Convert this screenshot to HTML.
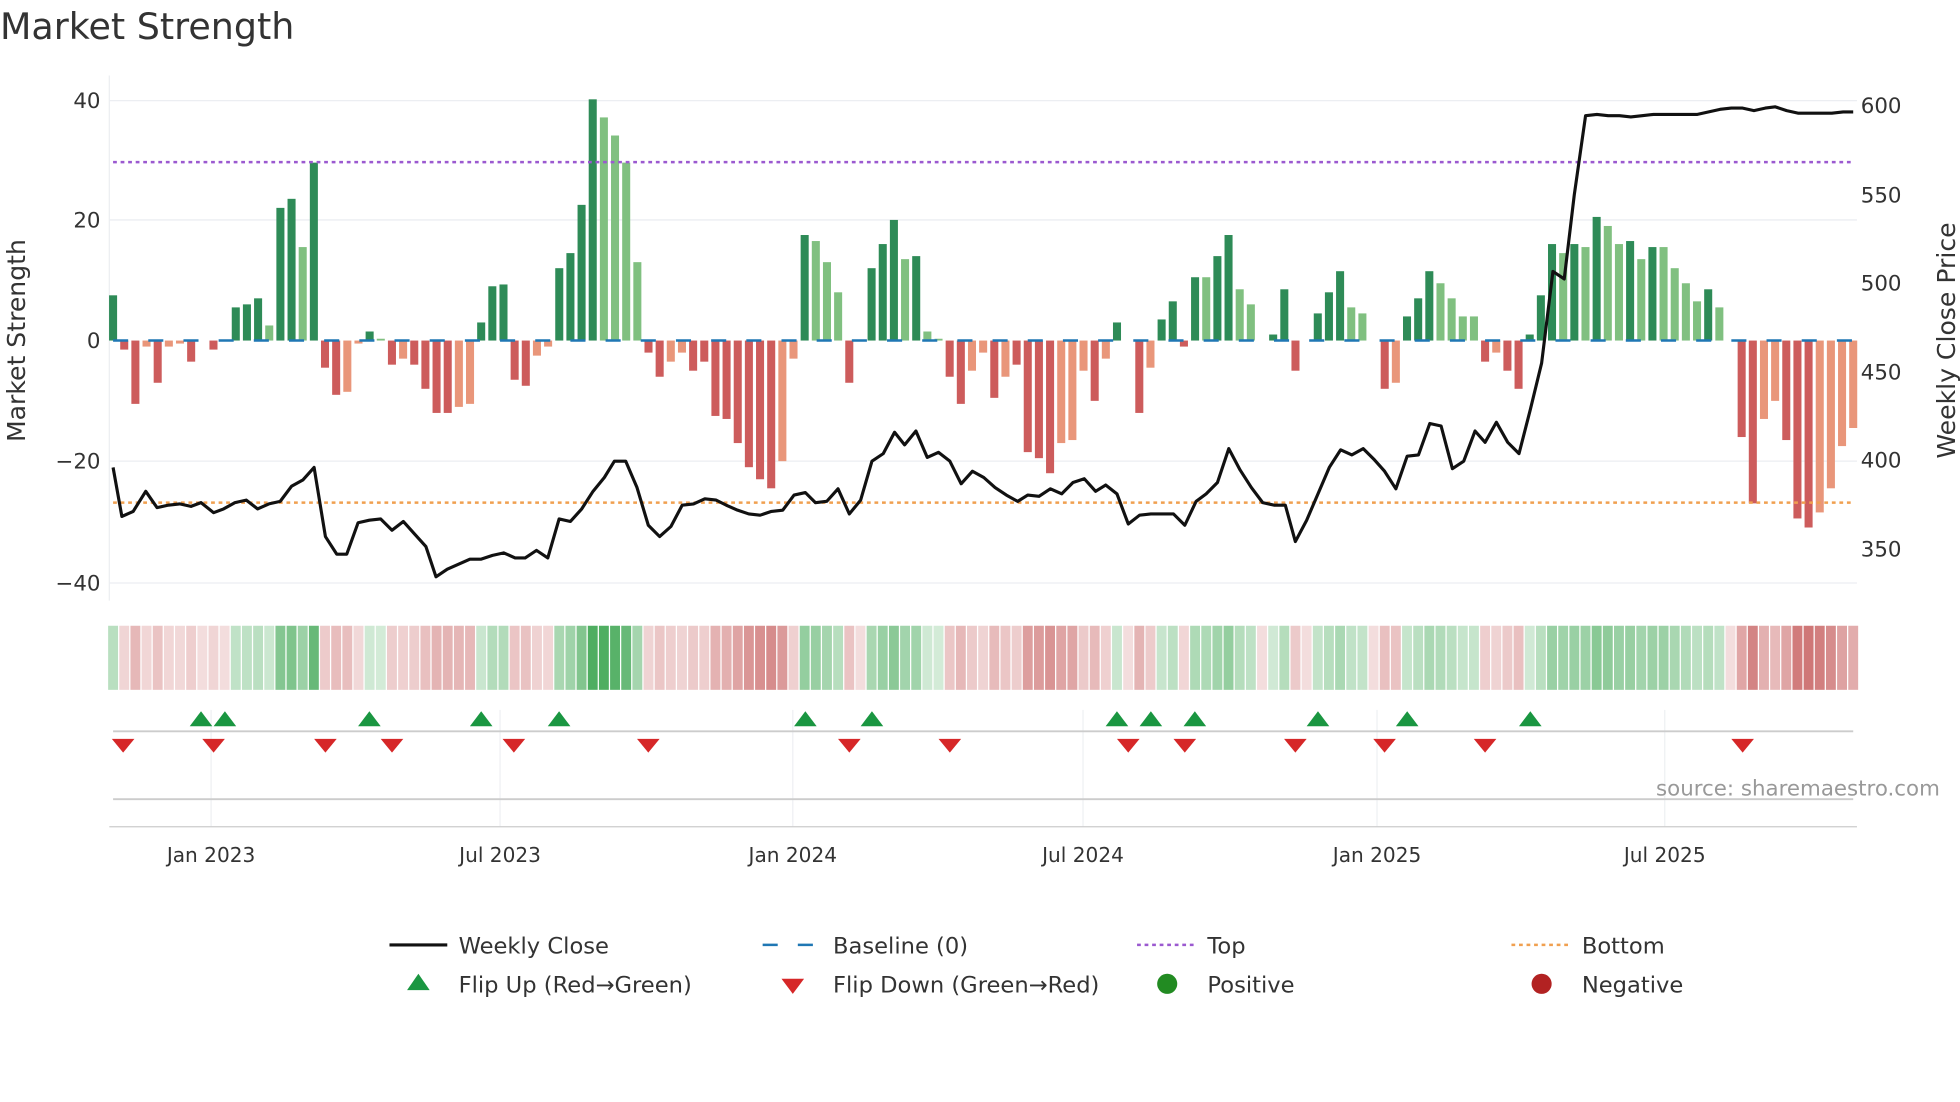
<!DOCTYPE html>
<html><head><meta charset="utf-8"><style>
html,body{margin:0;padding:0;background:#fff;}
svg{display:block;font-family:"DejaVu Sans","Liberation Sans",sans-serif;}
</style></head><body>
<svg id="s" width="1960" height="1102" viewBox="0 0 1560 877" xmlns="http://www.w3.org/2000/svg">
<rect width="1560" height="877" fill="#fff"/>
<text x="0" y="31" font-size="29" fill="#333">Market Strength</text>
<g stroke="#eceef2" stroke-width="1">
<line x1="87" y1="80" x2="1478" y2="80"/><line x1="87" y1="175" x2="1478" y2="175"/>
<line x1="87" y1="367" x2="1478" y2="367"/><line x1="87" y1="464" x2="1478" y2="464"/>
<line x1="87" y1="60" x2="87" y2="478"/>
</g>
<g font-size="17" fill="#333" text-anchor="end">
<text x="80" y="86">40</text><text x="80" y="181">20</text><text x="80" y="277">0</text>
<text x="80" y="373">−20</text><text x="80" y="470">−40</text>
</g>
<g font-size="17" fill="#333">
<text x="1481" y="90">600</text><text x="1481" y="161">550</text><text x="1481" y="231">500</text>
<text x="1481" y="302">450</text><text x="1481" y="372">400</text><text x="1481" y="443">350</text>
</g>
<text transform="translate(20,271) rotate(-90)" font-size="20" fill="#333" text-anchor="middle">Market Strength</text>
<text transform="translate(1556,271) rotate(-90)" font-size="20" fill="#333" text-anchor="middle">Weekly Close Price</text>
<g id="bars"></g>
<line x1="90" y1="271" x2="1475" y2="271" stroke="#1f77b4" stroke-width="2" stroke-dasharray="12,16"/>
<line x1="90" y1="129" x2="1475" y2="129" stroke="#9b59d0" stroke-width="2" stroke-dasharray="3,3"/>
<line x1="90" y1="400" x2="1475" y2="400" stroke="#f0a050" stroke-width="2" stroke-dasharray="3,3"/>
<polyline id="price" fill="none" stroke="#111" stroke-width="2.5" stroke-linejoin="round"/>
<g id="heat"></g>
<g stroke="#eef0f3"><line x1="168" y1="565" x2="168" y2="658"/><line x1="398" y1="565" x2="398" y2="658"/><line x1="631" y1="565" x2="631" y2="658"/><line x1="862" y1="565" x2="862" y2="658"/><line x1="1096" y1="565" x2="1096" y2="658"/><line x1="1325" y1="565" x2="1325" y2="658"/></g>
<line x1="90" y1="582" x2="1475" y2="582" stroke="#ccc" stroke-width="1.5"/>
<line x1="90" y1="636" x2="1475" y2="636" stroke="#ccc" stroke-width="1.5"/>
<line x1="87" y1="658" x2="1478" y2="658" stroke="#ccc" stroke-width="1"/>
<g id="marks"></g>
<text x="1544" y="633" font-size="17" fill="#999" text-anchor="end">source: sharemaestro.com</text>
<g font-size="16" fill="#333" text-anchor="middle">
<text x="168" y="686">Jan 2023</text><text x="398" y="686">Jul 2023</text><text x="631" y="686">Jan 2024</text>
<text x="862" y="686">Jul 2024</text><text x="1096" y="686">Jan 2025</text><text x="1325" y="686">Jul 2025</text>
</g>
<g font-size="18" fill="#333">
<line x1="310" y1="752" x2="356" y2="752" stroke="#111" stroke-width="2.5"/><text x="365" y="759">Weekly Close</text>
<line x1="607" y1="752" x2="652" y2="752" stroke="#1f77b4" stroke-width="2" stroke-dasharray="12,16"/><text x="663" y="759">Baseline (0)</text>
<line x1="905" y1="752" x2="950" y2="752" stroke="#9b59d0" stroke-width="2" stroke-dasharray="3,3"/><text x="961" y="759">Top</text>
<line x1="1203" y1="752" x2="1248" y2="752" stroke="#f0a050" stroke-width="2" stroke-dasharray="3,3"/><text x="1259" y="759">Bottom</text>
<polygon points="324,788 342,788 333,775" fill="#1a9641"/><text x="365" y="790">Flip Up (Red→Green)</text>
<polygon points="622,779 640,779 631,791" fill="#d62728"/><text x="663" y="790">Flip Down (Green→Red)</text>
<circle cx="929" cy="783" r="8" fill="#228b22"/><text x="961" y="790">Positive</text>
<circle cx="1227" cy="783" r="8" fill="#b22222"/><text x="1259" y="790">Negative</text>
</g>
</svg>
<script>
var NS="http://www.w3.org/2000/svg";
var data=[[7.5,'d'],[-1.5,'r'],[-10.5,'r'],[-1,'s'],[-7,'r'],[-1,'s'],[-0.5,'s'],[-3.5,'r'],[0,'z'],[-1.5,'r'],[0,'z'],[5.5,'d'],[6,'d'],[7,'d'],[2.5,'l'],[22,'d'],[23.5,'d'],[15.5,'l'],[29.5,'d'],[-4.5,'r'],[-9,'r'],[-8.5,'s'],[-0.5,'s'],[1.5,'d'],[0.3,'l'],[-4,'r'],[-3,'s'],[-4,'r'],[-8,'r'],[-12,'r'],[-12,'r'],[-11,'s'],[-10.5,'s'],[3,'d'],[9,'d'],[9.3,'d'],[-6.5,'r'],[-7.5,'r'],[-2.5,'s'],[-1,'s'],[12,'d'],[14.5,'d'],[22.5,'d'],[40,'d'],[37,'l'],[34,'l'],[29.5,'l'],[13,'l'],[-2,'r'],[-6,'r'],[-3.5,'s'],[-2,'s'],[-5,'r'],[-3.5,'r'],[-12.5,'r'],[-13,'r'],[-17,'r'],[-21,'r'],[-23,'r'],[-24.5,'r'],[-20,'s'],[-3,'s'],[17.5,'d'],[16.5,'l'],[13,'l'],[8,'l'],[-7,'r'],[0,'z'],[12,'d'],[16,'d'],[20,'d'],[13.5,'l'],[14,'d'],[1.5,'l'],[0.3,'l'],[-6,'r'],[-10.5,'r'],[-5,'s'],[-2,'s'],[-9.5,'r'],[-6,'s'],[-4,'r'],[-18.5,'r'],[-19.5,'r'],[-22,'r'],[-17,'s'],[-16.5,'s'],[-5,'s'],[-10,'r'],[-3,'s'],[3,'d'],[0,'z'],[-12,'r'],[-4.5,'s'],[3.5,'d'],[6.5,'d'],[-1,'r'],[10.5,'d'],[10.5,'l'],[14,'d'],[17.5,'d'],[8.5,'l'],[6,'l'],[0,'z'],[1,'d'],[8.5,'d'],[-5,'r'],[0,'z'],[4.5,'d'],[8,'d'],[11.5,'d'],[5.5,'l'],[4.5,'l'],[0,'z'],[-8,'r'],[-7,'s'],[4,'d'],[7,'d'],[11.5,'d'],[9.5,'l'],[7,'l'],[4,'l'],[4,'l'],[-3.5,'r'],[-2,'s'],[-5,'r'],[-8,'r'],[1,'d'],[7.5,'d'],[16,'d'],[14.5,'l'],[16,'d'],[15.5,'l'],[20.5,'d'],[19,'l'],[16,'l'],[16.5,'d'],[13.5,'l'],[15.5,'d'],[15.5,'l'],[12,'l'],[9.5,'l'],[6.5,'l'],[8.5,'d'],[5.5,'l'],[0,'z'],[-16,'r'],[-27,'r'],[-13,'s'],[-10,'s'],[-16.5,'r'],[-29.5,'r'],[-31,'r'],[-28.5,'s'],[-24.5,'s'],[-17.5,'s'],[-14.5,'s']];
var col={d:'#2e8b57',l:'#80c080',r:'#cd5c5c',s:'#e9967a',z:'#fff'};
var n=data.length, x0=90, x1=1475, step=(x1-x0)/(n-1);
var bars=document.getElementById('bars'), heat=document.getElementById('heat');
data.forEach(function(d,i){
 var v=d[0],x=x0+i*step;
 if(v!==0){var r=document.createElementNS(NS,'rect');
  var h=Math.abs(v)*4.8; r.setAttribute('x',x-3.2);r.setAttribute('width',6.4);
  r.setAttribute('y',v>0?271-h:271);r.setAttribute('height',h);r.setAttribute('fill',col[d[1]]);bars.appendChild(r);}
 var c=document.createElementNS(NS,'rect');
 c.setAttribute('x',x-step/2+0.5);c.setAttribute('width',step-1);c.setAttribute('y',498);c.setAttribute('height',51);
 var a=Math.min(0.9,0.22+Math.abs(v)/40*0.75);
 var fill=(v>0)?'rgba(60,165,80,'+a+')':'rgba(195,85,85,'+a+')';
 if(v===0) fill='rgba(195,85,85,0.2)';
 c.setAttribute('fill',fill);heat.appendChild(c);
});
var pts="90,372 97,411 106,407 116,391 125,404 134,402 143,401 152,403 160,400 170,408 178,405 187,400 196,398 205,405 214,401 223,399 232,387 241,382 250,372 259,427 268,441 276,441 285,416 294,414 303,413 312,422 321,415 330,425 339,435 347,459 356,453 365,449 374,445 383,445 392,442 401,440 410,444 418,444 427,438 436,444 445,413 454,415 463,405 472,391 481,380 489,367 498,367 507,388 516,418 525,427 534,419 543,402 552,401 561,397 570,398 578,402 587,406 596,409 605,410 614,407 623,406 632,394 641,392 649,400 658,399 667,389 676,409 685,398 694,367 703,361 712,344 720,354 729,343 738,364 747,360 756,367 765,385 774,375 783,380 792,388 801,394 810,399 818,394 827,395 836,389 845,393 854,384 863,381 872,391 880,386 889,393 898,417 907,410 916,409 925,409 934,409 943,418 952,399 960,393 969,384 978,357 987,374 996,388 1005,400 1014,402 1023,402 1031,431 1040,414 1049,393 1058,372 1067,358 1076,362 1085,357 1094,366 1102,375 1111,389 1120,363 1129,362 1138,337 1147,339 1156,373 1165,367 1174,343 1182,352 1191,336 1200,352 1209,361 1218,326 1227,289 1236,216 1245,222 1253,155 1262,92 1271,91 1280,92 1289,92 1298,93 1307,92 1316,91 1325,91 1334,91 1343,91 1351,91 1360,89 1369,87 1378,86 1387,86 1396,88 1405,86 1413,85 1422,88 1431,90 1440,90 1449,90 1458,90 1467,89 1475,89";
document.getElementById('price').setAttribute('points',pts);
var marks=document.getElementById('marks');
[160,179,294,383,445,641,694,889,916,951,1049,1120,1218].forEach(function(x){
 var p=document.createElementNS(NS,'polygon');p.setAttribute('points',(x-9)+',578 '+(x+9)+',578 '+x+',566');p.setAttribute('fill','#1a9641');marks.appendChild(p);});
[98,170,259,312,409,516,676,756,898,943,1031,1102,1182,1387].forEach(function(x){
 var p=document.createElementNS(NS,'polygon');p.setAttribute('points',(x-9)+',588 '+(x+9)+',588 '+x+',599');p.setAttribute('fill','#d62728');marks.appendChild(p);});
</script>
</body></html>
